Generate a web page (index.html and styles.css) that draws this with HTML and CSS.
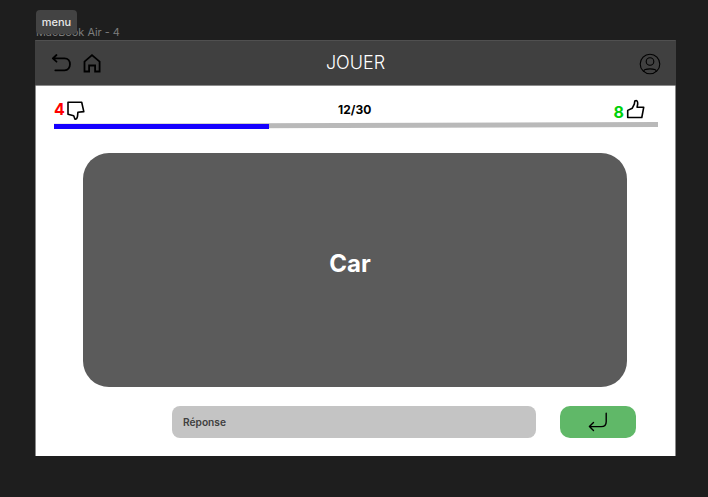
FILE: index.html
```html
<!DOCTYPE html>
<html lang="fr">
<head>
<meta charset="utf-8">
<title>Jouer</title>
<link rel="stylesheet" href="styles.css">
</head>
<body>
<div class="frame-label">MacBook Air - 4<span class="tooltip">menu</span></div>
<main class="frame">
  <header class="topbar">
    <nav class="nav">
      <svg class="icon-back" width="22" height="20" viewBox="51 53 22 20"><path d="M56.500 55 52.800 58.300l3.700 3.400M53.300 58.300H64.500c7.300 0 7.300 12 0 12h-9.200"/></svg>
      <svg class="icon-home" width="20" height="20" viewBox="82 53 20 20"><path d="M84.500 61.600 92 55.100 99.600 61.600V71.500H95.100V65.500H89.100V71.500H84.500Z"/></svg>
    </nav>
    <h1 class="title">JOUER</h1>
    <svg class="icon-user" width="22" height="22" viewBox="639.500 52.700 22 22"><circle cx="650.500" cy="63.700" r="9.800"/><circle cx="650.500" cy="61.200" r="3.800"/><path d="M644.400 71.200v-.5c0-2.800 12.200-2.800 12.200 0v.5"/></svg>
  </header>
  <section class="status">
    <div class="bad"><span class="count">4</span>
      <svg width="20" height="20" viewBox="66 101 20 20"><path d="M68 102.300H81.700L83.800 111.600 77.900 112.300 77.500 116.300Q76.900 119.400 75 119.200L73.700 115.700 68 114.300Z"/></svg>
    </div>
    <div class="progress-text">12/30</div>
    <div class="good"><span class="count">8</span>
      <svg width="20" height="20" viewBox="626 99 20 20"><path d="M627.700 110.400 632.300 108.200 634.300 104.200 634.800 101Q637.900 99.600 637.700 104L637.100 107.100 643.700 107.300 641.800 117.500H627.700Z"/></svg>
    </div>
  </section>
  <svg class="progress" width="604" height="8" viewBox="54 121 604 8"><path class="track" d="M54 123.700 658 122v5L54 128.700Z"/><path class="fill" d="M54 124H269v5H54Z"/></svg>
  <section class="card">Car</section>
  <form class="answer">
    <div class="field">Réponse</div>
    <div class="submit"><svg width="22" height="22" viewBox="587 411 22 22"><path d="M606.200 413.300V421.700Q606.200 426.600 601.200 426.600H589.400M593.500 422.600 589.400 426.600 593.500 430.500"/></svg></div>
  </form>
</main>
</body>
</html>
```

FILE: styles.css
```css
* { box-sizing: border-box; }
body {
  margin: 0;
  width: 708px;
  height: 497px;
  padding: 25px 0 0 35px;
  background: #1e1e1e;
  font-family: Inter, sans-serif;
  overflow: hidden;
}
svg { display: block; fill: none; stroke: #000; stroke-linejoin: round; stroke-linecap: round; }
.frame-label {
  position: relative;
  height: 15px;
  padding-left: 1px;
  font-size: 10.900px;
  line-height: 15px;
  color: #7d7d7d;
}
.tooltip {
  position: absolute;
  left: 1px;
  top: -15px;
  width: 41px;
  height: 24px;
  border-radius: 4px;
  background: #434343;
  color: #e8e8e8;
  font-size: 11px;
  font-weight: 500;
  line-height: 24px;
  text-align: center;
}
.frame {
  width: 641px;
  height: 416px;
  background: #fff;
  border-left: 1px solid #8a8a8a;
  border-right: 1px solid #8a8a8a;
}
.topbar {
  display: grid;
  grid-template-columns: 1fr auto 1fr;
  height: 46px;
  margin: 0 -1px;
  background: #404040;
  border: 1px solid #404040;
  border-top-color: #505050;
  border-bottom-color: #8c8c8c;
}
.nav { display: flex; gap: 9px; padding: 12px 0 0 15px; }
.icon-back, .icon-home { stroke-width: 1.8; }
.icon-home { stroke-linejoin: miter; }
.icon-user { justify-self: end; margin: 12px 14px 0 0; stroke-width: 1.1; }
.title {
  margin: 0;
  padding-top: 10px;
  font-size: 18px;
  line-height: 24px;
  font-weight: 300;
  color: #fff;
}
.status { display: flex; justify-content: space-between; height: 35px; padding: 0 29px 0 18px; }
.status svg { stroke-width: 1.6; }
.bad, .good { display: flex; font-size: 16px; line-height: 20px; font-weight: 700; }
.bad { color: #f00; padding-top: 15px; gap: 1px; }
.bad .count { margin-top: -2px; }
.good { color: #00d10a; padding-top: 13px; gap: 2px; }
.good .count { margin-top: 3px; }
.progress-text { padding-top: 16px; margin-left: 10px; font-size: 12px; line-height: 16px; font-weight: 700; color: #000; }
.progress { margin-left: 18px; }
.progress path { stroke: none; }
.track { fill: #b9b9b9; }
.fill { fill: #1500ff; }
.card {
  display: flex;
  align-items: center;
  justify-content: center;
  width: 543.500px;
  height: 234px;
  margin: 24px 0 0 47px;
  padding: 0 9.500px 13px 0;
  border-radius: 26px;
  background: #5b5b5b;
  color: #fff;
  font-size: 24px;
  font-weight: 700;
}
.answer { display: flex; gap: 24px; margin: 19px 0 0 136px; }
.field {
  width: 364px;
  height: 32px;
  padding-left: 11px;
  border-radius: 8px;
  background: #c4c4c4;
  color: #404040;
  font-size: 10.200px;
  font-weight: 600;
  line-height: 33px;
}
.submit { width: 76px; height: 32px; padding: 5px 0 0 27px; border-radius: 10px; background: #60b868; }
.submit svg { stroke-width: 1.4; }
```
